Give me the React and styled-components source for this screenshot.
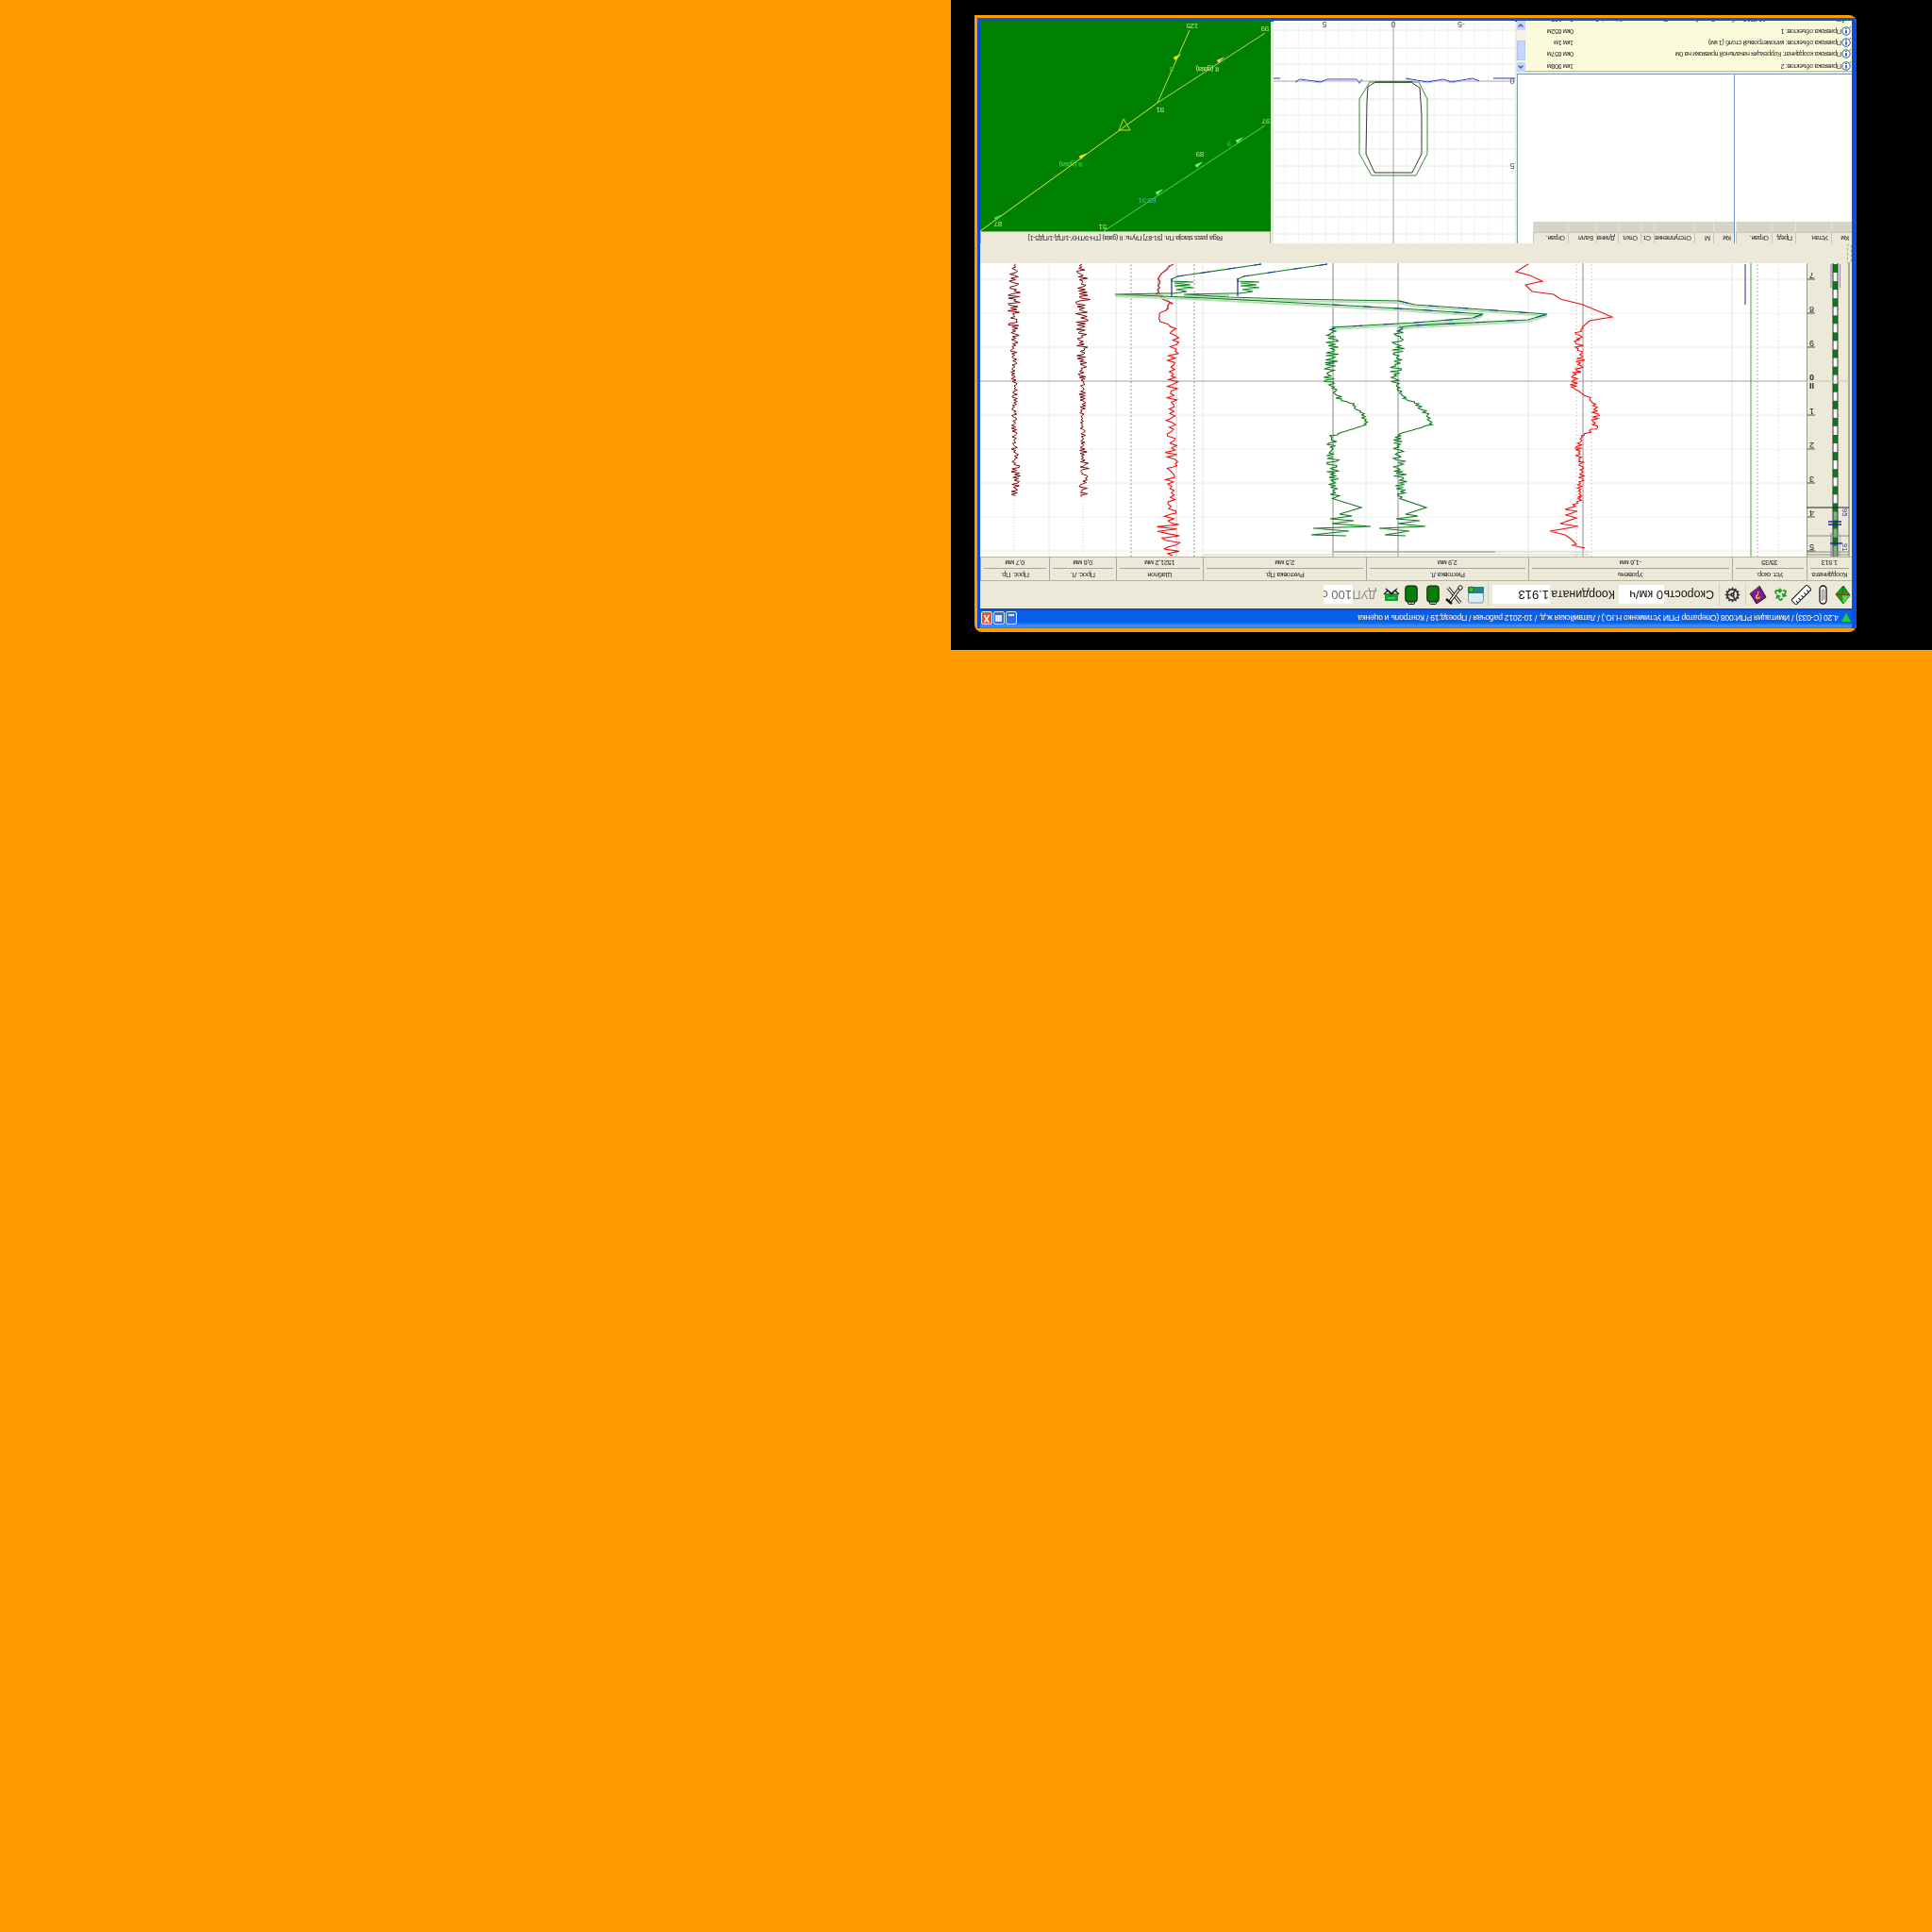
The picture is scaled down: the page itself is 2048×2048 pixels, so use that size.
import React from "react";
import styled, { createGlobalStyle } from "styled-components";
import { ChevronUp, ChevronDown, Recycle, Cog } from "lucide-react";

const GlobalStyle = createGlobalStyle`
  html, body {
    margin: 0;
    padding: 0;
    background: #ff9c00;
    min-height: 2048px;
  }
`;

const BEIGE = "#ece9d8";
const SANS = `"Liberation Sans", sans-serif`;

/* the whole screen is photographed upside down */
const Screen = styled.div`
  margin-left: 1008px;
  width: 1040px;
  height: 689px;
  box-sizing: border-box;
  padding: 19px 0 0 80px;
  background: #000;
  transform: rotate(180deg);
`;

const WindowFrame = styled.div`
  width: 935px;
  height: 654px;
  box-sizing: border-box;
  padding: 4px 3px 3px 0;
  background: #ff9c00;
  border-radius: 8px 8px 0 8px;
  overflow: hidden;
  filter: blur(0.35px);
`;

const WindowBody = styled.div`
  height: 100%;
  box-sizing: border-box;
  border-left: 5px solid #0a4fe0;
  border-right: 3px solid #0a4fe0;
  border-bottom: 4px solid #0a4fe0;
  background: ${BEIGE};
  font-family: ${SANS};
  color: #222;
`;

const TitleBar = styled.div`
  height: 21px;
  display: flex;
  align-items: center;
  background: linear-gradient(#1e78f0 0%, #3f94f8 12%, #0a5ee8 30%, #0a5ee8 85%, #0448c8 100%);
  color: #fff;
  font-size: 8.6px;
  letter-spacing: -0.25px;
  white-space: nowrap;
`;

const TitleText = styled.span`
  margin-left: 2px;
  flex: 1;
`;

const TitleButtons = styled.div`
  display: flex;
  gap: 1px;
  margin-right: 1px;
`;

const TitleButton = styled.div`
  width: 12px;
  height: 14px;
  box-sizing: border-box;
  border: 1px solid #dfe8fb;
  border-radius: 2px;
  background: ${({ $close }) => ($close ? "#e2563a" : "#2f6fe8")};
  color: #fff;
  font: bold 10px/12px ${SANS};
  text-align: center;
  display: flex;
  align-items: ${({ $bar }) => ($bar ? "flex-end" : "center")};
  justify-content: center;
`;

const TitleGlyph = styled.div`
  background: #dce8ff;
  width: ${({ $w }) => $w}px;
  height: ${({ $h }) => $h}px;
  margin-bottom: ${({ $bar }) => ($bar ? "2px" : "0")};
`;

const Toolbar = styled.div`
  height: 29px;
  display: flex;
  align-items: center;
  background: ${BEIGE};
`;

const Tool = styled.div`
  width: ${({ $w }) => $w}px;
  height: 21px;
  margin-left: ${({ $ml }) => $ml}px;
  flex: none;
  display: flex;
  align-items: center;
  justify-content: center;
`;

const ToolSep = styled.div`
  width: 1px;
  height: 24px;
  margin-left: ${({ $ml }) => $ml}px;
  background: #d4d0c0;
  flex: none;
`;

const ToolLabel = styled.span`
  margin-left: ${({ $ml }) => $ml}px;
  width: ${({ $w }) => $w}px;
  flex: none;
  font-size: 12.4px;
  white-space: nowrap;
  color: ${({ $off }) => ($off ? "#8a8a84" : "#111")};
`;

const ToolInput = styled.div`
  margin-left: ${({ $ml }) => $ml}px;
  width: ${({ $w }) => $w}px;
  height: 20px;
  flex: none;
  box-sizing: border-box;
  padding-left: 1px;
  background: #fff;
  font: 13px/20px ${SANS};
  color: ${({ $off }) => ($off ? "#666" : "#111")};
  white-space: nowrap;
  overflow: hidden;
`;

const InfoRow = styled.div`
  height: 26px;
  box-sizing: border-box;
  display: grid;
  grid-template-columns: 48px 79px 216px 172px 173px 92px 71px 73px;
  border-bottom: 1px solid #b5b2a0;
  border-top: 1px solid #b5b2a0;
  background: ${BEIGE};
`;

const InfoCell = styled.div`
  border-right: 1px solid #aca899;
  padding: 0 3px;
  display: flex;
  flex-direction: column;
  align-items: stretch;
  text-align: center;
  font-size: 7.4px;
  letter-spacing: -0.3px;
  line-height: 11px;
  white-space: nowrap;
  overflow: hidden;
`;

const InfoLabel = styled.div`
  height: 12px;
  border-bottom: 1px solid #a8a594;
`;

const ChartRow = styled.div`
  height: 311px;
  display: flex;
`;

const Ruler = styled.svg`
  display: block;
  flex: none;
  background: ${BEIGE};
`;

const Plot = styled.svg`
  display: block;
  flex: none;
  background: #fff;
`;

const Band = styled.div`
  height: 19px;
  display: flex;
  background: ${BEIGE};
`;

const BandGrip = styled.div`
  width: 3px;
  height: 18px;
  border: 1px dashed #7fc07f;
  border-left-color: #999;
  border-radius: 2px;
`;

const Panels = styled.div`
  height: 236px;
  margin-top: 2px;
  display: flex;
`;

const SideColumn = styled.div`
  width: 355px;
  flex: none;
  display: flex;
  flex-direction: column;
`;

const Tables = styled.div`
  height: 180px;
  box-sizing: border-box;
  display: flex;
  background: #fff;
  border-bottom: 1px solid #7f9db9;
  border-right: 1px solid #7f9db9;
`;

const TablePane = styled.div`
  width: ${({ $w }) => $w}px;
  flex: none;
  border-right: ${({ $divider }) => ($divider ? "1px solid #6f93c0" : "none")};
`;

const TableHead = styled.div`
  display: grid;
  grid-template-columns: ${({ $cols }) => $cols};
`;

const HeadCell = styled.div`
  height: 12px;
  box-sizing: border-box;
  padding-left: 3px;
  background: ${BEIGE};
  border-right: 1px solid #c9c6b5;
  border-bottom: 1px solid #c9c6b5;
  font-size: 7.2px;
  letter-spacing: -0.4px;
  line-height: 11px;
  white-space: nowrap;
  overflow: hidden;
`;

const HeadGap = styled.div`
  height: 11px;
  background: #d6d3c8;
  border-right: 1px solid #e4e2d8;
`;

const Journal = styled.div`
  height: 54px;
  margin-top: 2px;
  display: flex;
  overflow: hidden;
`;

const JournalList = styled.div`
  flex: 1;
  background: #fbfbdc;
  overflow: hidden;
  box-shadow: inset 0 1px 0 #a9b8c2;
`;

const JournalRow = styled.div`
  height: 12.4px;
  display: grid;
  grid-template-columns: 11px 284px 1fr;
  align-items: center;
  font-size: 7.2px;
  letter-spacing: -0.4px;
  line-height: 12px;
  white-space: nowrap;
  color: #2a2a2a;
`;

const ScrollBar = styled.div`
  width: 9px;
  flex: none;
  display: flex;
  flex-direction: column;
  background: #f3f3ec;
`;

const ScrollButton = styled.div`
  height: 10px;
  background: #c4d5fb;
  display: flex;
  align-items: center;
  justify-content: center;
  color: #3d5a8c;
`;

const ScrollThumb = styled.div`
  height: 21px;
  margin-top: 2px;
  background: #c6d6fa;
  border: 1px solid #b3c6ee;
  box-sizing: border-box;
`;

const ScrollTrack = styled.div`
  flex: 1;
`;

const CrossSection = styled.svg`
  display: block;
  flex: none;
  margin-left: 2px;
  background: #fff;
`;

const MapColumn = styled.div`
  width: 308px;
  flex: none;
  margin-left: 3px;
  display: flex;
  flex-direction: column;
`;

const MapView = styled.svg`
  display: block;
  background: #008000;
`;

const MapStatus = styled.div`
  height: 13px;
  box-sizing: border-box;
  border: 1px solid #a8a594;
  border-top: none;
  background: ${BEIGE};
  text-align: center;
  font-size: 7.2px;
  letter-spacing: -0.28px;
  line-height: 12px;
  white-space: nowrap;
`;

/* --- trace data, read off the picture in page coordinates --- */

const random = (seed) => () => (seed = (seed * 16807) % 2147483647) / 2147483647;

const wiggle = (anchors, seed, step = 1.5) => {
  const r = random(seed);
  const out = [];
  let sign = 1;
  for (let i = 0; i < anchors.length - 1; i++) {
    const [x0, y0, a0] = anchors[i];
    const [x1, y1, a1] = anchors[i + 1];
    for (let y = y0; y < y1; y += step) {
      const t = (y - y0) / (y1 - y0);
      if (r() > 0.3) sign = -sign;
      out.push([x0 + (x1 - x0) * t + sign * r() * (a0 + (a1 - a0) * t), y]);
    }
  }
  return out;
};

const plotX = (x) => 1915 - x;
const plotY = (y) => 590 - y;
const toPlot = (list) => list.map(([x, y]) => `${plotX(x).toFixed(1)},${plotY(y).toFixed(1)}`).join(" ");

const shift = (list, dx) => list.map(([x, y]) => [x + dx, y]);

const wearLeft = wiggle([[1075, 280, 4], [1075, 310, 8], [1075, 345, 6], [1075, 400, 3.5], [1075, 470, 3], [1077, 500, 5], [1076, 527, 5]], 11, 1.5);
const wearRight = wiggle([[1147, 280, 5], [1147, 310, 9], [1147, 350, 7], [1147, 400, 4], [1148, 470, 3], [1149, 495, 6], [1148, 527, 5]], 23, 1.5);

const gauge = wiggle(
  [[1243, 280, 1], [1229, 293, 2], [1228, 312, 3], [1241, 322, 3], [1228, 335, 2], [1230, 341, 1], [1245, 346, 6], [1243, 400, 6], [1242, 470, 7], [1242, 520, 6], [1240, 545, 7], [1238, 556, 14], [1238, 582, 13], [1244, 590, 7]],
  37,
  2.4
);

const gaugeGuide = [[1240, 281], [1228, 294], [1228, 310], [1240, 320], [1236, 329]];

const levelAnchors = [
  [1620, 280], [1607, 288], [1622, 292], [1635, 298], [1617, 302], [1624, 309], [1647, 312], [1654, 317],
  [1678, 323], [1709, 336], [1685, 340], [1677, 347]
];
const level = [
  ...levelAnchors,
  ...wiggle([[1675, 348, 3], [1672, 360, 6], [1676, 380, 5], [1672, 395, 5], [1668, 410, 5], [1678, 418, 1], [1686, 422, 2], [1692, 434, 4], [1690, 455, 4], [1677, 462, 1], [1673, 475, 4], [1676, 490, 4], [1675, 527, 3], [1670, 537, 6]], 53, 1.6),
  [1659, 540], [1672, 542], [1660, 546], [1671, 549], [1654, 555], [1673, 558], [1643, 563], [1659, 567], [1665, 571], [1671, 577], [1666, 578], [1680, 581]
];

const railHead = [[1337, 280], [1248, 293], [1242, 296]];
const railComb = [[1242, 298], [1265, 299], [1245, 300], [1262, 302], [1245, 303], [1265, 305], [1247, 307], [1258, 309], [1244, 311]];

const railLeft = [
  ...railHead, ...railComb,
  [1233, 311], [1182, 312], [1233, 314], [1300, 317], [1413, 323], [1500, 328], [1572, 333], [1561, 337], [1500, 342], [1413, 347],
  ...wiggle([[1413, 348, 5], [1412, 365, 9], [1411, 385, 7], [1408, 405, 6], [1414, 410, 3], [1420, 423, 6], [1433, 428, 3], [1445, 440, 5], [1448, 450, 2], [1440, 453, 1], [1423, 458, 1], [1412, 462, 5], [1413, 500, 8], [1416, 530, 5]], 71, 1.5),
  [1443, 538], [1420, 545], [1433, 547], [1410, 550], [1435, 552], [1412, 555], [1453, 558], [1392, 560], [1430, 563], [1390, 567], [1427, 568]
];

const railRight = [
  ...shift(railHead, 70), ...shift(railComb, 70),
  [1303, 311], [1255, 312], [1303, 315], [1367, 317], [1483, 319], [1500, 323], [1640, 333], [1620, 339], [1500, 345], [1483, 347],
  ...wiggle([[1483, 348, 5], [1481, 365, 9], [1480, 385, 7], [1478, 405, 5], [1484, 412, 4], [1490, 423, 5], [1502, 428, 3], [1512, 440, 5], [1517, 450, 2], [1507, 453, 1], [1490, 458, 1], [1481, 462, 5], [1484, 500, 8], [1487, 530, 5]], 97, 1.5),
  [1512, 538], [1490, 545], [1503, 547], [1480, 550], [1505, 552], [1482, 555], [1511, 558], [1462, 560], [1494, 563], [1468, 567], [1490, 568]
];

const dottedColumns = [
  [1199, "#a06a5a"], [1266, "#a06a5a"], [1671, "#e8a8a8"], [1687, "#e8a8a8"], [1863, "#999"], [1885, "#ecc8c8"]
];

const gridRows = [296, 332, 368, 440, 476, 512, 548, 584];
const gridColumns = [1112, 1183, 1275, 1448, 1620, 1836];

const ChartPlot = () => (
  <Plot width="876" height="311">
    {gridRows.map((y) => (
      <line key={y} x1="0" x2="876" y1={plotY(y)} y2={plotY(y)} stroke="#efeee6" />
    ))}
    {gridColumns.map((x) => (
      <line key={x} x1={plotX(x)} x2={plotX(x)} y1="0" y2="311" stroke="#e8e7de" />
    ))}
    {dottedColumns.map(([x, c]) => (
      <line key={x} x1={plotX(x)} x2={plotX(x)} y1="0" y2="311" stroke={c} strokeDasharray="1.5 2.5" />
    ))}
    <line x1={plotX(1075)} x2={plotX(1075)} y1="5" y2="62" stroke="#ccc" strokeDasharray="1 2" />
    <line x1={plotX(1148)} x2={plotX(1148)} y1="5" y2="62" stroke="#ccc" strokeDasharray="1 2" />
    <line x1={plotX(1247)} x2={plotX(1247)} y1="0" y2="311" stroke="#ccc" />
    <line x1="0" x2="876" y1={plotY(404)} y2={plotY(404)} stroke="#a0a0a0" />
    {[1413, 1482, 1678].map((x) => (
      <line key={x} x1={plotX(x)} x2={plotX(x)} y1="0" y2="311" stroke="#8a8a8a" />
    ))}
    <line x1={plotX(1856)} x2={plotX(1856)} y1="0" y2="311" stroke="#4f9a4f" />
    <line x1={plotX(1850)} x2={plotX(1850)} y1={plotY(323)} y2="310" stroke="#2a2a90" />

    <line x1={plotX(1413)} x2={plotX(1685)} y1="5" y2="5" stroke="#cfcfc6" />
    <line x1={plotX(1413)} x2={plotX(1585)} y1="5" y2="5" stroke="#8f8f8f" />
    <line x1={plotX(1275)} x2={plotX(1685)} y1="2" y2="2" stroke="#cfcfc6" />

    <polyline points={toPlot(wearLeft)} fill="none" stroke="#7c0a0a" />
    <polyline points={toPlot(wearRight)} fill="none" stroke="#7c0a0a" />

    <polyline points={toPlot(gaugeGuide)} fill="none" stroke="#4f5fd0" strokeWidth="0.8" />
    <polyline points={toPlot(gauge)} fill="none" stroke="#f01010" strokeWidth="1.1" />
    <polyline points={toPlot(level)} fill="none" stroke="#f01010" strokeWidth="1.1" />

    <polyline points={toPlot(railLeft.slice(12, 22))} fill="none" stroke="#b8e0b8" strokeWidth="2" transform="translate(0 -2)" />
    <polyline points={toPlot(railRight.slice(12, 22))} fill="none" stroke="#b8e0b8" strokeWidth="2" transform="translate(0 -2)" />
    <polyline points={toPlot(railLeft)} fill="none" stroke="#0a7a1a" strokeWidth="1.1" />
    <polyline points={toPlot(railRight)} fill="none" stroke="#0a7a1a" strokeWidth="1.1" />

    <line x1={plotX(1242)} x2={plotX(1242)} y1={plotY(295)} y2={plotY(314)} stroke="#1a2a90" strokeWidth="1.2" />
    <line x1={plotX(1312)} x2={plotX(1312)} y1={plotY(295)} y2={plotY(314)} stroke="#1a2a90" strokeWidth="1.2" />
    <polyline points={toPlot(railRight.slice(16, 25))} fill="none" stroke="#1f3fa0" strokeDasharray="10 22" />
    <polyline points={toPlot(railLeft.slice(16, 24))} fill="none" stroke="#1f3fa0" strokeDasharray="10 22" />
    <polyline points={toPlot(railRight.slice(0, 2))} fill="none" stroke="#1f3fa0" strokeDasharray="8 20" />
    <polyline points={toPlot(railLeft.slice(0, 2))} fill="none" stroke="#1f3fa0" strokeDasharray="8 20" />
  </Plot>
);

const rulerX = (x) => 1963 - x;
const rulerY = (y) => 590 - y;
const rulerMarks = [
  ["7", 292], ["8", 328], ["9", 364], ["0", 400, true], ["II", 409, true], ["1", 436], ["2", 472], ["3", 508], ["4", 544], ["5", 580]
];
const stripes = Array.from({ length: 17 }, (_, i) => 280 + i * 18.1);

const RulerPanel = () => (
  <Ruler width="48" height="311">
    <rect x={rulerX(1948)} y="0" width="5" height="311" fill="#fff" />
    {stripes.map((y) => (
      <rect key={y} x={rulerX(1948)} y={rulerY(y + 9)} width="5" height="9" fill="#0a7a1a" />
    ))}
    <rect x={rulerX(1948)} y="0" width="5" height="52" fill="#0a7a1a" opacity="0.55" />
    <line x1={rulerX(1943)} x2={rulerX(1943)} y1="0" y2="311" stroke="#333" />
    <line x1={rulerX(1948)} x2={rulerX(1948)} y1="0" y2="311" stroke="#333" />
    <rect x={rulerX(1942)} y="0" width="2" height="25" fill="#b4b4c4" />
    <rect x={rulerX(1951)} y="0" width="1" height="25" fill="#b4b4c4" />
    <rect x={rulerX(1942)} y={rulerY(305)} width="2" height="25" fill="#b4b4c4" />
    <rect x={rulerX(1951)} y={rulerY(305)} width="1" height="25" fill="#8c8ca8" />
    <line x1="3" x2="3" y1="0" y2="311" stroke="#9a978a" strokeWidth="1.5" />
    <line x1="47.5" x2="47.5" y1="0" y2="311" stroke="#9a978a" />
    <line x1="3" x2="48" y1={rulerY(538)} y2={rulerY(538)} stroke="#222" />
    <line x1="3" x2="48" y1={rulerY(568)} y2={rulerY(568)} stroke="#8a8a80" />
    <line x1="3" x2="48" y1={rulerY(585)} y2={rulerY(585)} stroke="#8a8a80" />
    <line x1="3" x2="48" y1={rulerY(588)} y2={rulerY(588)} stroke="#8a8a80" />
    <line x1="3" x2="48" y1={rulerY(404)} y2={rulerY(404)} stroke="#c8c6b8" />
    <line x1={rulerX(1938)} x2={rulerX(1952)} y1={rulerY(553)} y2={rulerY(553)} stroke="#1a2a90" strokeWidth="1.4" />
    <line x1={rulerX(1938)} x2={rulerX(1952)} y1={rulerY(556)} y2={rulerY(556)} stroke="#1a2a90" strokeWidth="1.4" />
    <line x1={rulerX(1940)} x2={rulerX(1953)} y1={rulerY(576)} y2={rulerY(576)} stroke="#1a2a90" strokeWidth="1.4" />
    {gridRows.map((y) => (
      <line key={y} x1={rulerX(1924)} x2={rulerX(1916)} y1={rulerY(y)} y2={rulerY(y)} stroke="#555" />
    ))}
    {rulerMarks.map(([t, y, bold]) => (
      <text key={t} x={rulerX(1918)} y={rulerY(y) + 3} textAnchor="end" fontFamily="Liberation Sans" fontSize="9" fontWeight={bold ? "700" : "400"} fill="#222">
        {t}
      </text>
    ))}
    <text transform={`translate(10 ${rulerY(539)}) rotate(-90)`} fontFamily="Liberation Sans" fontSize="7.5" fill="#33338a">95</text>
    <text transform={`translate(10 ${rulerY(576)}) rotate(-90)`} fontFamily="Liberation Sans" fontSize="7.5" fill="#33338a">91</text>
  </Ruler>
);

const crossX = (x) => 1606 - x;
const crossY = (y) => 258 - y;
const crossRows = [32, 51, 68, 105, 122, 140, 158, 176, 194, 212, 230, 248];
const crossCols = Array.from({ length: 17 }, (_, i) => 1477 + (i - 8) * 14.4);
const toCross = (list) => list.map(([x, y]) => `${crossX(x)},${crossY(y)}`).join(" ");

const profileA = [[1350, 83], [1357, 83]];
const profileB = [[1373, 87], [1378, 84], [1400, 87], [1407, 84], [1438, 84], [1441, 88], [1444, 84]];
const profileC = [[1490, 83], [1513, 87], [1530, 84], [1538, 87], [1561, 83], [1568, 86]];
const profileD = [[1583, 83], [1606, 83]];
const outerGauge = [[1452, 87], [1504, 87], [1513, 105], [1513, 163], [1501, 186], [1454, 186], [1441, 163], [1441, 105]];
const innerGauge = [[1458, 87], [1450, 92], [1449, 108], [1448, 163], [1457, 183], [1497, 183], [1507, 163], [1507, 122], [1505, 93], [1497, 88]];

const CrossView = () => (
  <CrossSection width="256" height="236">
    {crossRows.map((y) => (
      <line key={y} x1="0" x2="256" y1={crossY(y)} y2={crossY(y)} stroke="#e8e8e4" />
    ))}
    {crossCols.map((x) => (
      <line key={x} x1={crossX(x)} x2={crossX(x)} y1="0" y2="236" stroke="#f1f1ed" />
    ))}
    <line x1="0" x2="256" y1={crossY(86)} y2={crossY(86)} stroke="#a8a8a8" />
    <line x1={crossX(1477)} x2={crossX(1477)} y1="0" y2="236" stroke="#a8a8a8" />
    <polygon points={toCross(outerGauge)} fill="none" stroke="#3d8a3d" />
    <polyline points={toCross(innerGauge)} fill="none" stroke="#222" strokeWidth="0.9" />
    <line x1={crossX(1458)} x2={crossX(1497)} y1={crossY(87)} y2={crossY(87)} stroke="#155a15" strokeWidth="1.5" />
    {[profileA, profileB, profileC, profileD].map((p) => (
      <polyline key={p[0][0]} points={toCross(p)} fill="none" stroke="#2233c0" />
    ))}
    <polyline points={toCross(profileB.map(([x, y]) => [x, y + 1]))} fill="none" stroke="#c6c6f0" />
    <polyline points={toCross(profileC.map(([x, y]) => [x, y + 1]))} fill="none" stroke="#c6c6f0" />
    <g fontFamily="Liberation Sans" fontSize="9" fill="#555" textAnchor="middle">
      <text x={crossX(1404)} y={crossY(23)}>5</text>
      <text x={crossX(1477)} y={crossY(23)}>0</text>
      <text x={crossX(1549)} y={crossY(23)}>-5</text>
      <text x={crossX(1603)} y={crossY(83)}>0</text>
      <text x={crossX(1603)} y={crossY(173)}>5</text>
    </g>
  </CrossSection>
);

const mapX = (x) => 1347 - x;
const mapY = (y) => 245 - y;
const mapLabels = [
  ["125", 1264, 28, "#c8e878"],
  ["99", 1341, 31, "#b8e090"],
  ["II (gala)", 1280, 74, "#d8e8a8"],
  ["8", 1242, 74, "#40d040"],
  ["91", 1230, 117, "#d0e8a8"],
  ["87", 1058, 238, "#c8e878"],
  ["51", 1169, 241, "#c8e878"],
  ["97", 1342, 129, "#b8e090"],
  ["89", 1272, 164, "#b8e090"],
  ["9", 1303, 153, "#40d040"],
  ["II (gala)", 1135, 175, "#40e040"],
  ["89-91", 1216, 213, "#30c0a0"]
];
const mapArrows = [
  [1148, 165, "#f0f000"],
  [1294, 63, "#f0b880"],
  [1248, 60, "#e8e800"],
  [1229, 203, "#70f070"],
  [1271, 174, "#70f070"],
  [1314, 148, "#70f070"],
  [1058, 230, "#50d050"]
];

const TrackMap = () => (
  <MapView width="308" height="223">
    <line x1={mapX(1039)} y1={mapY(245)} x2={mapX(1227)} y2={mapY(109)} stroke="#e6e640" />
    <line x1={mapX(1227)} y1={mapY(109)} x2={mapX(1341)} y2={mapY(35)} stroke="#b8d860" />
    <line x1={mapX(1227)} y1={mapY(109)} x2={mapX(1261)} y2={mapY(32)} stroke="#c0e040" />
    <line x1={mapX(1170)} y1={mapY(245)} x2={mapX(1341)} y2={mapY(133)} stroke="#50d850" />
    {mapArrows.map(([x, y, c]) => (
      <polygon
        key={x}
        points={`${mapX(x) - 5},${mapY(y)} ${mapX(x) + 4},${mapY(y) - 2} ${mapX(x) + 4},${mapY(y) + 2}`}
        fill={c}
        transform={`rotate(-35 ${mapX(x)} ${mapY(y)})`}
      />
    ))}
    <polygon points={`${mapX(1186)},${mapY(138)} ${mapX(1198)},${mapY(138)} ${mapX(1191)},${mapY(126)}`} fill="none" stroke="#d0d820" />
    {mapLabels.map(([t, x, y, c]) => (
      <text key={t + x} x={mapX(x)} y={mapY(y) + 3} textAnchor="middle" fontFamily="Liberation Sans" fontSize="8" letterSpacing="-0.3" fill={c}>
        {t}
      </text>
    ))}
  </MapView>
);

/* --- toolbar pictures --- */

const LeafIcon = () => (
  <svg width="17" height="21" viewBox="0 0 17 21">
    <path d="M1 10 L8 1 L16 11 L8 20 Z" fill="#16a016" stroke="#0c6a0c" />
    <path d="M1 10 L8 1 L9 11 Z" fill="#5cd050" />
    <path d="M1 10 L16 11 M8 20 L9 11" stroke="#a02020" fill="none" />
  </svg>
);

const ClipIcon = () => (
  <svg width="9" height="21" viewBox="0 0 9 21">
    <rect x="1" y="1" width="7" height="19" rx="3.5" fill="#fff" stroke="#111" strokeWidth="1.3" />
    <path d="M3.5 5 V15 a1 1 0 0 0 2 0 V4" fill="none" stroke="#777" />
  </svg>
);

const RulerIcon = () => (
  <svg width="21" height="21" viewBox="0 0 21 21">
    <g transform="rotate(-45 10.5 10.5)">
      <rect x="-1" y="7" width="23" height="7" fill="#fff" stroke="#111" />
      <path d="M3 7v3M7 7v3M11 7v3M15 7v3M19 7v3" stroke="#111" />
    </g>
  </svg>
);

const BookIcon = () => (
  <svg width="19" height="21" viewBox="0 0 19 21">
    <path d="M1 8 L11 1 L18 12 L8 20 Z" fill="#7a1f8a" stroke="#2a0a30" />
    <path d="M8 20 L18 12 L18 14 L9 20 Z" fill="#ddd" />
    <text x="9.5" y="14" textAnchor="middle" fontFamily="Liberation Sans" fontWeight="700" fontSize="10" fill="#f0d020">?</text>
  </svg>
);

const BoxIcon = () => (
  <svg width="19" height="21" viewBox="0 0 19 21">
    <rect x="1.5" y="2" width="16" height="11" rx="2" fill="#dcecf4" stroke="#7a9aaa" />
    <rect x="1" y="12" width="17" height="7" fill="#2d7f88" />
    <circle cx="14.5" cy="16" r="3" fill="#40c020" stroke="#206010" />
  </svg>
);

const ToolsIcon = () => (
  <svg width="19" height="21" viewBox="0 0 19 21">
    <path d="M3 2 L16 18" stroke="#111" strokeWidth="3.4" />
    <path d="M3 2 L16 18" stroke="#fff" strokeWidth="1.4" />
    <path d="M15 2 L4 17" stroke="#111" strokeWidth="3.4" />
    <path d="M15 2 L4 17" stroke="#fff" strokeWidth="1.4" />
    <path d="M12 1 L18 6" stroke="#111" strokeWidth="2.4" />
    <circle cx="3" cy="18" r="2.2" fill="#fff" stroke="#111" />
  </svg>
);

const CellIcon = () => (
  <svg width="14" height="21" viewBox="0 0 14 21">
    <rect x="3.5" y="0.5" width="7" height="4" rx="1" fill="#bbb" stroke="#222" />
    <rect x="0.8" y="3" width="12.4" height="17" rx="2.5" fill="#048004" stroke="#111" />
  </svg>
);

const TrainIcon = () => (
  <svg width="18" height="16" viewBox="0 0 18 16">
    <rect x="2" y="1" width="14" height="8" fill="#10a030" />
    <path d="M1 8 L5 12 L9 8 L13 12 L17 8 M3 14 L9 9 L15 14" fill="none" stroke="#222" strokeWidth="1.4" />
    <path d="M5 4 H13" stroke="#7fe090" />
  </svg>
);

const InfoIcon = ({ ok }) => (
  <svg width="11" height="12" viewBox="0 0 11 12">
    {ok ? (
      <path d="M1 6 L4 10 L10 2" fill="none" stroke="#30a030" strokeWidth="1.6" />
    ) : (
      <>
        <circle cx="6" cy="6" r="4.2" fill="#fff" stroke="#2050b0" />
        <path d="M6 3.5 V7 M6 8 V9" stroke="#102a80" strokeWidth="1.4" />
        <path d="M2 9.5 L1 11" stroke="#2050b0" />
      </>
    )}
  </svg>
);

const journal = [
  ["Привязка объектов: 2", "1км 908м"],
  ["Привязка координат: Коррекция начальной привязки на 0м", "0км 657м"],
  ["Привязка объектов: километровый столб (1 км)", "1км 1м"],
  ["Привязка объектов: 1", "0км 652м"],
  ["Привязка начала проезда: 10-2012 рабочая, Латвийская ж.д., Рига пасс., путь II (гала), 0км", "0км 123м", true]
];

const info = [
  ["Координата", "1.913"],
  ["Уст. скор.", "35/35"],
  ["Уровень", "-1,6 мм"],
  ["Рихтовка Л.", "2,9 мм"],
  ["Рихтовка Пр.", "2,5 мм"],
  ["Шаблон", "1521,2 мм"],
  ["Прос. Л.", "0,6 мм"],
  ["Прос. Пр.", "0,7 мм"]
];

const speedHead = {
  cols: "22px 38px 25px 38px",
  labels: ["Км", "Устан.", "Пред.", "Огран."]
};
const faultHead = {
  cols: "22px 20px 43px 14px 24px 23px 30px 37px",
  labels: ["Км", "М", "Отступление", "Ст.", "Откл.", "Длина", "Балл", "Огран."]
};

const TableHeader = ({ cols, labels }) => (
  <TableHead $cols={cols}>
    {labels.map((l) => (
      <HeadCell key={l}>{l}</HeadCell>
    ))}
    {labels.map((l) => (
      <HeadGap key={l} />
    ))}
  </TableHead>
);

export default function App() {
  return (
    <>
      <GlobalStyle />
      <Screen>
        <WindowFrame>
          <WindowBody>
            <TitleBar>
              <svg width="12" height="12" viewBox="0 0 12 12">
                <path d="M1 2 L11 2 L6 11 Z" fill="#20d030" />
              </svg>
              <TitleText>4.20 (С-033) / Имитация РПИ:008 (Оператор РПИ Устименко Н.Ю.) / Латвийская ж.д. / 10-2012 рабочая / Проезд:19 / Контроль и оценка</TitleText>
              <TitleButtons>
                <TitleButton $bar><TitleGlyph $w={6} $h={2} $bar /></TitleButton>
                <TitleButton><TitleGlyph $w={7} $h={7} /></TitleButton>
                <TitleButton $close>X</TitleButton>
              </TitleButtons>
            </TitleBar>

            <Toolbar>
              <Tool $w={17} $ml={1}><LeafIcon /></Tool>
              <Tool $w={9} $ml={8}><ClipIcon /></Tool>
              <Tool $w={21} $ml={8}><RulerIcon /></Tool>
              <Tool $w={15} $ml={4}><Recycle size={21} color="#149a20" strokeWidth={2.6} /></Tool>
              <Tool $w={19} $ml={7}><BookIcon /></Tool>
              <ToolSep $ml={3} />
              <Tool $w={17} $ml={5}><Cog size={19} color="#333" strokeWidth={2.4} /></Tool>
              <ToolSep $ml={5} />
              <ToolLabel $ml={5} $w={50}>Скорость</ToolLabel>
              <ToolInput $ml={3} $w={48}>0 км/ч</ToolInput>
              <ToolLabel $ml={4} $w={68}>Координата</ToolLabel>
              <ToolInput $ml={1} $w={61}>1.913</ToolInput>
              <ToolSep $ml={4} />
              <Tool $w={19} $ml={3}><BoxIcon /></Tool>
              <Tool $w={19} $ml={4}><ToolsIcon /></Tool>
              <Tool $w={14} $ml={6}><CellIcon /></Tool>
              <Tool $w={14} $ml={9}><CellIcon /></Tool>
              <Tool $w={18} $ml={5}><TrainIcon /></Tool>
              <ToolLabel $ml={7} $w={24} $off>ДУП</ToolLabel>
              <ToolInput $ml={1} $w={31} $off>100 с</ToolInput>
            </Toolbar>

            <InfoRow>
              {info.map(([label, value]) => (
                <InfoCell key={label}>
                  <InfoLabel>{label}</InfoLabel>
                  <div>{value}</div>
                </InfoCell>
              ))}
            </InfoRow>

            <ChartRow>
              <RulerPanel />
              <ChartPlot />
            </ChartRow>

            <Band>
              <BandGrip />
            </Band>

            <Panels>
              <SideColumn>
                <Tables>
                  <TablePane $w={124} $divider>
                    <TableHeader cols={speedHead.cols} labels={speedHead.labels} />
                  </TablePane>
                  <TablePane $w={213}>
                    <TableHeader cols={faultHead.cols} labels={faultHead.labels} />
                  </TablePane>
                </Tables>
                <Journal>
                  <JournalList>
                    {journal.map(([text, place, ok]) => (
                      <JournalRow key={place}>
                        <InfoIcon ok={ok} />
                        <span>{text}</span>
                        <span>{place}</span>
                      </JournalRow>
                    ))}
                  </JournalList>
                  <ScrollBar>
                    <ScrollButton><ChevronUp size={8} strokeWidth={4} /></ScrollButton>
                    <ScrollThumb />
                    <ScrollTrack />
                    <ScrollButton><ChevronDown size={8} strokeWidth={4} /></ScrollButton>
                  </ScrollBar>
                </Journal>
              </SideColumn>
              <CrossView />
              <MapColumn>
                <MapStatus>Riga pass stacija  Пл. [91-87] П/уть: II (gala)  [ТН-9/ТНУ-1/ПД-1/ПД5-1]</MapStatus>
                <TrackMap />
              </MapColumn>
            </Panels>
          </WindowBody>
        </WindowFrame>
      </Screen>
    </>
  );
}
